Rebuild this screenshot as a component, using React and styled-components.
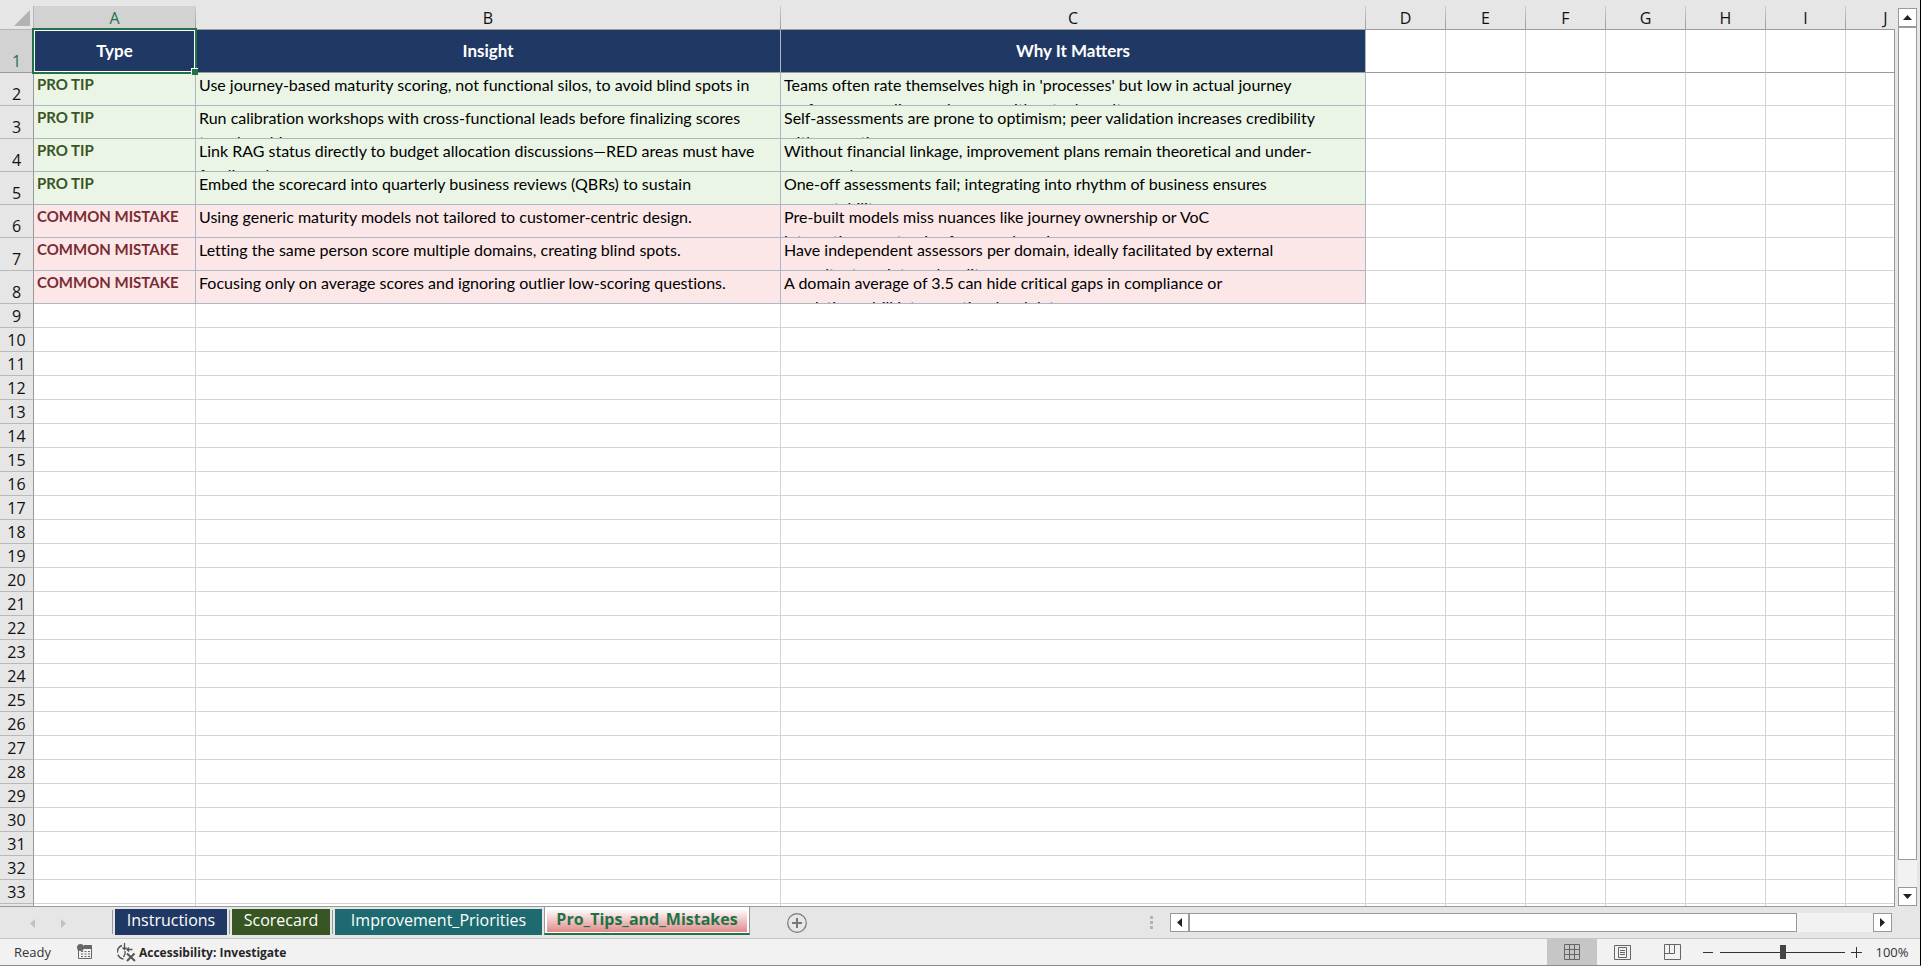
import styled, { createGlobalStyle, css } from "styled-components";
import { useState } from "react";

const GlobalStyle = createGlobalStyle`
  * {
    box-sizing: border-box;
  }
  body {
    margin: 0;
    overflow: hidden;
    background: #e6e6e6;
    font-family: "Open Sans", "Noto Sans", sans-serif;
  }
  button {
    margin: 0;
    padding: 0;
    border: 0;
    background: none;
    font-family: inherit;
    color: inherit;
  }
`;

const Window = styled.div`
  display: flex;
  flex-direction: column;
  height: 100vh;
  background: #e6e6e6;
  border-right: 1px solid #000;
  border-bottom: 1px solid #8a8a8a;
`;

const Workspace = styled.div`
  display: flex;
  flex: 1;
  min-height: 0;
`;

const Sheet = styled.div`
  flex: 1;
  min-width: 0;
  padding-top: 6px;
  overflow: hidden;
  border-bottom: 1px solid #999;
  position: relative;
`;

const SheetEdge = styled.div`
  width: 1px;
  margin-top: 29px;
  background: #999;
`;

const Grid = styled.table`
  width: 1926px;
  table-layout: fixed;
  border-collapse: separate;
  border-spacing: 0;
`;

const Col = styled.col`
  width: ${(props) => props.$width}px;
`;

const Corner = styled.td`
  height: 24px;
  padding: 4px 3px 3px 14px;
  border-bottom: 1px solid #b5b5b5;
  border-right: 1px solid #b5b5b5;
  line-height: 0;
`;

const ColumnHead = styled.th`
  height: 24px;
  padding: 0;
  font-size: 16px;
  font-weight: 400;
  line-height: 22px;
  text-align: center;
  color: #111;
  border-right: 1px solid;
  border-bottom: 1px solid #999;
  border-image: linear-gradient(#cfcfcf, #999) 1;
  ${(props) =>
    props.$active &&
    css`
      background: #d2d2d2;
      color: #217346;
    `}
`;

const RowHead = styled.th`
  height: ${(props) => props.$height}px;
  padding: 0;
  font-size: 16px;
  font-weight: 400;
  line-height: 22px;
  text-align: center;
  vertical-align: bottom;
  color: #111;
  background: ${(props) => (props.$active ? "#d2d2d2" : "#e6e6e6")};
  border-right: 1px solid #999;
  border-bottom: 1px solid ${(props) => (props.$active ? "#999" : "#b9b9b9")};
  ${(props) => props.$active && "color: #217346;"}
`;

const Cell = styled.td`
  padding: 0;
  vertical-align: top;
  background: #fff;
  border-right: 1px solid #d4d4d4;
  border-bottom: 1px solid ${(props) => (props.$frozen ? "#999" : "#d4d4d4")};
`;

const TitleCell = styled.td`
  position: relative;
  padding: 0;
  font-family: Lato, sans-serif;
  font-size: 17px;
  font-weight: 700;
  line-height: 20px;
  text-align: center;
  color: #fff;
  background: #203864;
  border-right: 1px solid #aeb6c1;
  border-bottom: 1px solid #999;
`;

const fills = { tip: "#eaf5e6", mistake: "#fce7e8" };
const inks = { tip: "#375623", mistake: "#7b2c32" };

const FilledCell = styled(Cell)`
  background: ${(props) => fills[props.$kind]};
  border-color: #aeb6c1;
`;

const CellText = styled.div`
  height: 32px;
  padding-left: 3px;
  overflow: hidden;
  white-space: pre;
  font-family: Lato, sans-serif;
  font-size: 16px;
  font-variant-ligatures: none;
  line-height: 24px;
  color: #000;
`;

const TypeText = styled(CellText)`
  font-size: 15px;
  font-weight: 700;
  line-height: 22px;
  color: ${(props) => inks[props.$kind]};
`;

const Selection = styled.span`
  position: absolute;
  inset: -2px;
  z-index: 1;
  border: 2px solid #217346;
  box-shadow: inset 0 0 0 1px #fff;

  &::after {
    content: "";
    position: absolute;
    right: -3px;
    bottom: -3px;
    width: 6px;
    height: 6px;
    background: #217346;
    border-top: 1px solid #fff;
    border-left: 1px solid #fff;
  }
`;

const VerticalScroll = styled.div`
  display: flex;
  flex-direction: column;
  width: 19px;
  margin: 8px 3px 1px 3px;
  background: #f2f2f2;
`;

const ScrollButton = styled.button`
  display: flex;
  align-items: center;
  justify-content: center;
  width: 19px;
  height: 19px;
  background: #fff;
  border: 1px solid #999;
`;

const VerticalThumb = styled.div`
  flex: 833;
  background: #fff;
  border: 1px solid #999;
`;

const VerticalRest = styled.div`
  flex: 27;
`;

const TabBar = styled.div`
  display: flex;
  height: 32px;
  border-bottom: 1px solid #c6c6c6;
`;

const TabArrows = styled.div`
  display: flex;
  align-items: center;
  gap: 26px;
  width: 112px;
  padding-left: 30px;
`;

const TabSlot = styled.div`
  padding: 2px 2px 4px 2px;
  display: flex;

  &::before {
    content: "";
    width: 1px;
    margin: 1px 2px 0 -2px;
    background: #999;
  }
`;

const Tab = styled.button`
  width: ${(props) => props.$width}px;
  height: 26px;
  font-size: 16px;
  line-height: 22px;
  padding-bottom: 4px;
  color: #fff;
  background: ${(props) => props.$color};
`;

const ActiveTab = styled.button`
  width: 206px;
  height: 29px;
  margin-top: -1px;
  padding: 3px 2px 1px;
  background: #fff;
  border: 1px solid #999;
  border-top: 0;
  border-bottom: 2px solid #217346;
`;

const ActiveLabel = styled.span`
  display: block;
  height: 23px;
  font-size: 16px;
  font-weight: 700;
  line-height: 20px;
  color: #217346;
  background: linear-gradient(#fff, #e08a8a);
`;

const AddButton = styled.button`
  width: 20px;
  height: 20px;
  margin: 6px 0 0 37px;
  line-height: 0;
`;

const Spacer = styled.div`
  flex: 1;
`;

const Dots = styled.div`
  display: flex;
  flex-direction: column;
  gap: 2px;
  width: 3px;
  margin: 9px 17px 0 0;
`;

const Dot = styled.i`
  height: 3px;
  background: #b3b3b3;
`;

const HorizontalScroll = styled.div`
  display: flex;
  flex: 0 1 722px;
  height: 19px;
  margin: 6px 28px 0 0;
  background: #f2f2f2;
`;

const HorizontalThumb = styled.div`
  flex: 608;
  background: #fff;
  border: 1px solid #999;
`;

const HorizontalRest = styled.div`
  flex: 76;
`;

const StatusBar = styled.footer`
  display: flex;
  align-items: center;
  height: 26px;
  color: #333;
  background: #f2f2f2;
  font-size: 13px;
`;

const Ready = styled.span`
  width: 77px;
  padding-left: 14px;
`;

const StatusButton = styled.button`
  display: flex;
  align-items: center;
  gap: 2px;
  margin-right: 24px;
  font-size: 12px;
  font-weight: 700;
  color: #262626;
`;

const Views = styled.div`
  display: flex;
  margin-right: 6px;
`;

const ViewButton = styled.button`
  display: flex;
  align-items: center;
  justify-content: center;
  width: 50px;
  height: 26px;
  background: ${(props) => (props.$active ? "#c6c6c6" : "none")};
`;

const ZoomButton = styled.button`
  width: 11px;
  height: 20px;
  line-height: 0;
`;

const ZoomSlider = styled.input`
  appearance: none;
  width: 125px;
  height: 14px;
  margin: 0 6px;
  background: linear-gradient(#333, #333) center / 100% 1px no-repeat;

  &::-webkit-slider-thumb {
    appearance: none;
    width: 6px;
    height: 14px;
    background: #444;
  }
`;

const ZoomLevel = styled.button`
  width: 58px;
  padding-left: 2px;
  font-size: 13px;
  text-align: center;
`;

const letters = ["A", "B", "C", "D", "E", "F", "G", "H", "I", "J"];
const widths = [162, 585, 585, 80, 80, 80, 80, 80, 80, 80];

const rows = [
  {
    kind: "tip",
    insight: "Use journey-based maturity scoring, not functional silos, to avoid blind spots in",
    why: "Teams often rate themselves high in 'processes' but low in actual journey\nperformance—align each score with actual results.",
  },
  {
    kind: "tip",
    insight: "Run calibration workshops with cross-functional leads before finalizing scores\nto reduce bias.",
    why: "Self-assessments are prone to optimism; peer validation increases credibility\nwith executives.",
  },
  {
    kind: "tip",
    insight: "Link RAG status directly to budget allocation discussions—RED areas must have\nfunding plans.",
    why: "Without financial linkage, improvement plans remain theoretical and under-\nresourced.",
  },
  {
    kind: "tip",
    insight: "Embed the scorecard into quarterly business reviews (QBRs) to sustain",
    why: "One-off assessments fail; integrating into rhythm of business ensures\naccountability.",
  },
  {
    kind: "mistake",
    insight: "Using generic maturity models not tailored to customer-centric design.",
    why: "Pre-built models miss nuances like journey ownership or VoC\nintegration—customize for your domain.",
  },
  {
    kind: "mistake",
    insight: "Letting the same person score multiple domains, creating blind spots.",
    why: "Have independent assessors per domain, ideally facilitated by external\nconsultants or internal audit.",
  },
  {
    kind: "mistake",
    insight: "Focusing only on average scores and ignoring outlier low-scoring questions.",
    why: "A domain average of 3.5 can hide critical gaps in compliance or\nescalation—drill into question-level data.",
  },
];

const emptyRows = Array.from({ length: 26 }, (_, i) => i + 9);
const labels = { tip: "PRO TIP", mistake: "COMMON MISTAKE" };

const arrows = {
  up: "M0 5 L4.5 0 L9 5Z",
  down: "M0 0 L9 0 L4.5 5Z",
  left: "M5 0 L5 9 L0 4.5Z",
  right: "M0 0 L5 4.5 L0 9Z",
};

const Arrow = ({ dir, color = "#222" }) => {
  const flat = dir === "up" || dir === "down";
  return (
    <svg width={flat ? 9 : 5} height={flat ? 5 : 9} aria-hidden="true">
      <path d={arrows[dir]} fill={color} />
    </svg>
  );
};

const MacroIcon = () => (
  <svg width="16" height="16" viewBox="0 0 16 16" aria-hidden="true">
    <path d="M1.5 6v8.5h13V4" fill="none" stroke="#666" />
    <path d="M7 1h8v4H6z" fill="#666" />
    <circle cx="3.5" cy="3.5" r="3.5" fill="#666" />
    <path d="M4 7.5h2M7.5 7.5h2M11 7.5h2M4 10h2M7.5 10h2M11 10h2M4 12.5h2M7.5 12.5h2M11 12.5h2" stroke="#666" />
  </svg>
);

const AccessibilityIcon = () => (
  <svg width="20" height="19" viewBox="0 0 20 19" fill="none" stroke="#555" aria-hidden="true">
    <path d="M5 2.5A7 7 0 0 0 6.5 16" strokeWidth="1.4" strokeDasharray="9 2" />
    <path d="M7.5 0v6M5.5 4.5l2 2 2-2M15.5 6.5H10M12 4.5l-2 2 2 2" strokeWidth="1.3" />
    <path d="M10 10.5l8 7.5M17.5 10.5L10 18" strokeWidth="2" />
    <path d="M8 8v3l-1.5 3" strokeWidth="1.3" />
  </svg>
);

const NormalIcon = () => (
  <svg width="16" height="16" fill="none" stroke="#666" aria-hidden="true">
    <path d="M.5.5h15v15H.5zM5.5.5v15M10.5.5v15M.5 5.5h15M.5 10.5h15" />
  </svg>
);

const LayoutIcon = () => (
  <svg width="17" height="15" fill="none" stroke="#666" aria-hidden="true">
    <path d="M.5.5h16v14H.5zM4.5 2.5h8v10h-8zM6 5.5h5M6 7.5h5M6 9.5h5" />
  </svg>
);

const BreakIcon = () => (
  <svg width="17" height="16" fill="none" stroke="#666" aria-hidden="true">
    <path d="M.5.5h16v15H.5zM5.5.5v9M.5 9.5h10V.5" />
  </svg>
);

const App = () => {
  const [zoom, setZoom] = useState(100);

  return (
    <Window>
      <GlobalStyle />
      <Workspace>
        <Sheet>
          <Grid>
            <colgroup>
              <Col $width={34} />
              {letters.map((letter, i) => (
                <Col key={letter} $width={widths[i]} />
              ))}
            </colgroup>
            <thead>
              <tr>
                <Corner>
                  <svg width="16" height="16" aria-hidden="true">
                    <path d="M16 0v16H0z" fill="#b3b3b3" />
                  </svg>
                </Corner>
                {letters.map((letter) => (
                  <ColumnHead key={letter} scope="col" $active={letter === "A"}>
                    {letter}
                  </ColumnHead>
                ))}
              </tr>
            </thead>
            <tbody>
              <tr>
                <RowHead scope="row" $height={43} $active>1</RowHead>
                <TitleCell>
                  Type
                  <Selection />
                </TitleCell>
                <TitleCell>Insight</TitleCell>
                <TitleCell>Why It Matters</TitleCell>
                {letters.slice(3).map((letter) => (
                  <Cell key={letter} $frozen />
                ))}
              </tr>
              {rows.map((row, i) => (
                <tr key={row.insight}>
                  <RowHead scope="row" $height={33}>{i + 2}</RowHead>
                  <FilledCell $kind={row.kind}>
                    <TypeText $kind={row.kind}>{labels[row.kind]}</TypeText>
                  </FilledCell>
                  <FilledCell $kind={row.kind}>
                    <CellText>{row.insight}</CellText>
                  </FilledCell>
                  <FilledCell $kind={row.kind}>
                    <CellText>{row.why}</CellText>
                  </FilledCell>
                  {letters.slice(3).map((letter) => (
                    <Cell key={letter} />
                  ))}
                </tr>
              ))}
              {emptyRows.map((n) => (
                <tr key={n}>
                  <RowHead scope="row" $height={24}>{n}</RowHead>
                  {letters.map((letter) => (
                    <Cell key={letter} />
                  ))}
                </tr>
              ))}
            </tbody>
          </Grid>
        </Sheet>
        <SheetEdge />
        <VerticalScroll>
          <ScrollButton aria-label="Scroll up"><Arrow dir="up" /></ScrollButton>
          <VerticalThumb />
          <VerticalRest />
          <ScrollButton aria-label="Scroll down"><Arrow dir="down" /></ScrollButton>
        </VerticalScroll>
      </Workspace>

      <TabBar>
        <TabArrows>
          <button aria-label="Previous sheet"><Arrow dir="left" color="#c0c0c0" /></button>
          <button aria-label="Next sheet"><Arrow dir="right" color="#c0c0c0" /></button>
        </TabArrows>
        <TabSlot><Tab $width={112} $color="#203864">Instructions</Tab></TabSlot>
        <TabSlot><Tab $width={98} $color="#375623">Scorecard</Tab></TabSlot>
        <TabSlot><Tab $width={207} $color="#1d6b70">Improvement_Priorities</Tab></TabSlot>
        <ActiveTab>
          <ActiveLabel>Pro_Tips_and_Mistakes</ActiveLabel>
        </ActiveTab>
        <AddButton aria-label="New sheet">
          <svg width="20" height="20" fill="none" stroke="#777" aria-hidden="true">
            <circle cx="10" cy="10" r="9.3" strokeWidth="1.2" />
            <path d="M5 10h10M10 5v10" strokeWidth="2" />
          </svg>
        </AddButton>
        <Spacer />
        <Dots>
          <Dot />
          <Dot />
          <Dot />
        </Dots>
        <HorizontalScroll>
          <ScrollButton aria-label="Scroll left"><Arrow dir="left" /></ScrollButton>
          <HorizontalThumb />
          <HorizontalRest />
          <ScrollButton aria-label="Scroll right"><Arrow dir="right" /></ScrollButton>
        </HorizontalScroll>
      </TabBar>

      <StatusBar>
        <Ready>Ready</Ready>
        <StatusButton aria-label="Record macro"><MacroIcon /></StatusButton>
        <StatusButton>
          <AccessibilityIcon />
          Accessibility: Investigate
        </StatusButton>
        <Spacer />
        <Views>
          <ViewButton aria-label="Normal" $active><NormalIcon /></ViewButton>
          <ViewButton aria-label="Page layout"><LayoutIcon /></ViewButton>
          <ViewButton aria-label="Page break preview"><BreakIcon /></ViewButton>
        </Views>
        <ZoomButton aria-label="Zoom out" onClick={() => setZoom(Math.max(10, zoom - 10))}>
          <svg width="11" height="11" stroke="#333" aria-hidden="true"><path d="M0 5.5h10" /></svg>
        </ZoomButton>
        <ZoomSlider
          type="range"
          aria-label="Zoom"
          min="0"
          max="200"
          value={zoom}
          onChange={(e) => setZoom(Number(e.target.value))}
        />
        <ZoomButton aria-label="Zoom in" onClick={() => setZoom(Math.min(200, zoom + 10))}>
          <svg width="11" height="11" stroke="#333" aria-hidden="true"><path d="M0 5.5h11M5.5 0v11" /></svg>
        </ZoomButton>
        <ZoomLevel>{zoom}%</ZoomLevel>
      </StatusBar>
    </Window>
  );
};

export default App;
